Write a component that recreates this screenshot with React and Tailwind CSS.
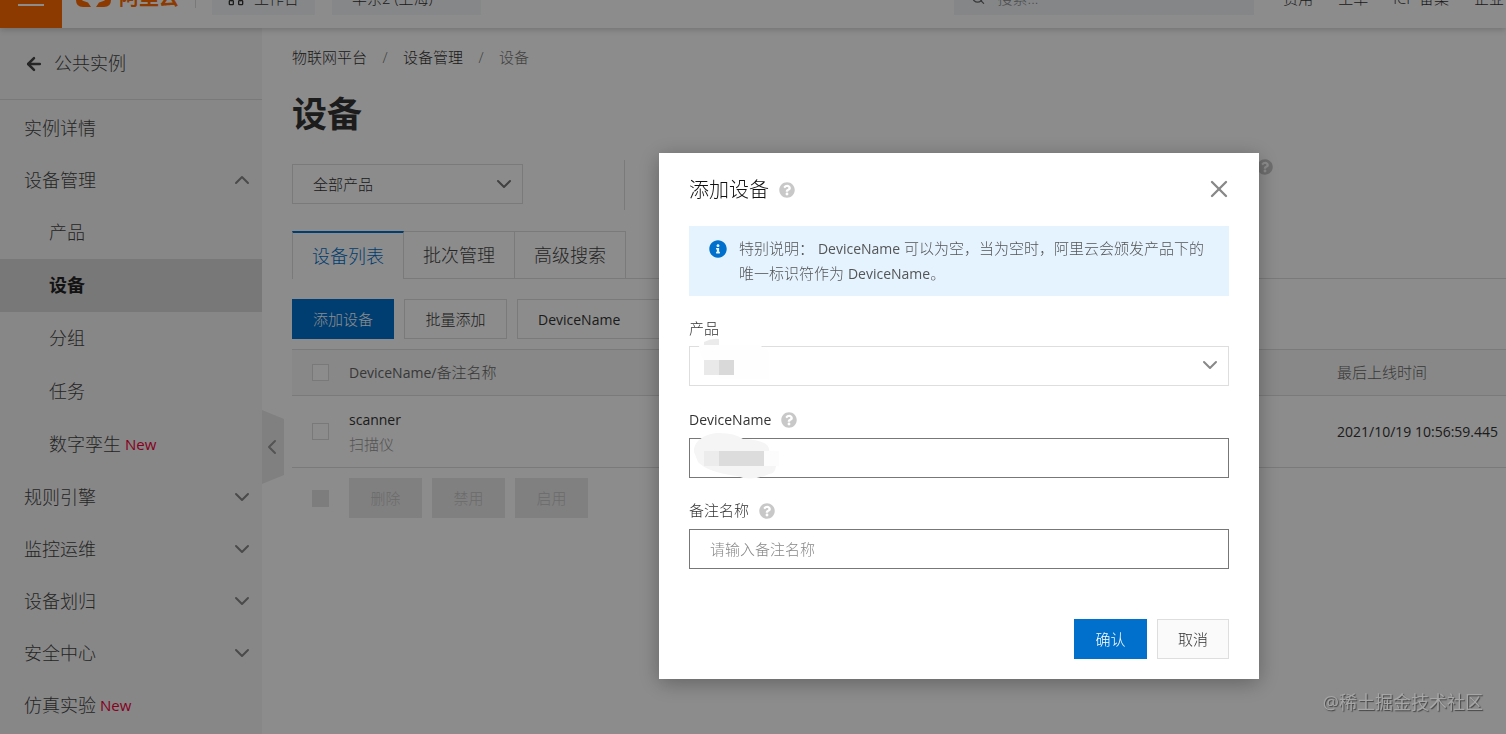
import React, { useState } from 'react';
import { ArrowLeft, ChevronDown, ChevronLeft, ChevronUp, Network, Search, X } from 'lucide-react';
import { FaInfoCircle, FaQuestionCircle } from 'react-icons/fa';
import clsx from 'clsx';

const MENU = [
  { label: '实例详情' },
  {
    label: '设备管理',
    open: true,
    children: [
      { label: '产品' },
      { label: '设备', active: true },
      { label: '分组' },
      { label: '任务' },
      { label: '数字孪生', isNew: true },
    ],
  },
  { label: '规则引擎', open: false },
  { label: '监控运维', open: false },
  { label: '设备划归', open: false },
  { label: '安全中心', open: false },
  { label: '仿真实验', isNew: true },
];

const TABS = ['设备列表', '批次管理', '高级搜索'];

const DEVICES = [{ name: 'scanner', remark: '扫描仪', lastOnline: '2021/10/19 10:56:59.445' }];

// Latin runs are set one step smaller than the Chinese text around them
function Latin({ children }) {
  return <span className="text-[14px] font-normal">{children}</span>;
}

function NewBadge() {
  return <span className="ml-1 text-[15px] font-normal text-[#f5003d]">New</span>;
}

function Help({ label }) {
  return (
    <button type="button" aria-label={label} className="text-[#c8c8c8]">
      <FaQuestionCircle className="size-4" />
    </button>
  );
}

function TopBar() {
  return (
    <header className="relative z-10 -mt-8 flex h-15 shrink-0 items-center bg-white shadow-[0_2px_6px_rgba(0,0,0,0.18)]">
      <button type="button" aria-label="菜单" className="flex h-full w-[62px] items-center justify-center bg-[#ff6a00]">
        <svg width="26" height="20" viewBox="0 0 26 20" stroke="#fff" strokeWidth="2">
          <path d="M0 3h26M0 10h26M0 17h26" />
        </svg>
      </button>
      <a href="#home" className="ml-[14px] flex items-center gap-2 text-xl font-bold text-[#ff6a00]">
        <svg width="35" height="20" viewBox="0 0 35 20" fill="#ff6a00">
          <path d="M13 1H7Q0 1 0 8v4Q0 19 7 19H15L12 14.500 7.500 13Q5 12 5 10V9Q5 7 7.500 6.500L12 5Z" />
          <path d="M22 1H28Q35 1 35 8v4Q35 19 28 19H20L23 14.500 27.500 13Q30 12 30 10V9Q30 7 27.500 6.500L23 5Z" />
          <path d="M12 9h11v2H12Z" />
        </svg>
        阿里云
      </a>
      <span className="ml-4 h-5 w-px bg-[#ddd]" />
      <a href="#workbench" className="ml-4 flex h-[34px] w-[103px] items-center justify-center gap-2.5 bg-[#f4f6f8]">
        <Network className="size-4" />
        工作台
      </a>
      <button type="button" className="ml-[17px] h-[34px] w-[149px] bg-[#f4f6f8] pl-5 text-left">
        华东2 (上海)
      </button>
      <label className="mr-[29px] ml-auto flex h-[34px] w-[300px] items-center gap-3 bg-[#f1f5f8] px-[17px] text-[#666]">
        <Search className="size-4" />
        <input type="search" aria-label="搜索" placeholder="搜索..." className="w-full bg-transparent outline-none placeholder:text-[#888]" />
      </label>
      <nav className="mr-0.5 flex gap-[25px] whitespace-nowrap">
        <a href="#cost">费用</a>
        <a href="#ticket">工单</a>
        <a href="#icp">ICP 备案</a>
        <a href="#enterprise">企业</a>
      </nav>
    </header>
  );
}

function MenuItem({ item }) {
  const Arrow = item.open ? ChevronUp : ChevronDown;
  return (
    <li>
      <a href={`#${item.label}`} className="flex h-13 items-center pr-2 pl-6">
        {item.label}
        {item.isNew && <NewBadge />}
        {item.open !== undefined && <Arrow className="ml-auto size-6 text-[#888]" strokeWidth={2} />}
      </a>
      {item.children && (
        <ul>
          {item.children.map((child) => (
            <li key={child.label}>
              <a
                href={`#${child.label}`}
                className={clsx('flex h-[53px] items-center pl-[49px]', child.active && 'bg-[#dadada] font-bold text-[#222]')}
              >
                {child.label}
                {child.isNew && <NewBadge />}
              </a>
            </li>
          ))}
        </ul>
      )}
    </li>
  );
}

function Sidebar() {
  return (
    <aside className="relative w-[262px] shrink-0 bg-[#f6f6f6] text-[18px] text-[#444]">
      <a href="#instances" className="flex h-[72px] items-center gap-2.5 border-b border-[#ddd] pl-6">
        <ArrowLeft className="size-5" strokeWidth={3} />
        公共实例
      </a>
      <ul className="pt-0.5">
        {MENU.map((item) => <MenuItem key={item.label} item={item} />)}
      </ul>
      <button type="button" aria-label="收起" className="absolute top-[382px] left-full h-[74px] w-[22px] text-[#999]">
        <svg className="absolute inset-0" width="22" height="74" viewBox="0 0 22 74" fill="#e9e9e9">
          <path d="M0 0L22 9V65L0 74Z" />
        </svg>
        <ChevronLeft className="relative -ml-0.5 size-6" strokeWidth={2} />
      </button>
    </aside>
  );
}

function DeviceTable() {
  return (
    <table className="mt-2.5 w-full border-collapse text-left">
      <thead>
        <tr className="h-[46px] border-y border-[#dedede] bg-[#f7f7f7] text-[#666]">
          <th className="w-[57px] pl-5"><input type="checkbox" aria-label="全选" className="block size-[17px] appearance-none border border-[#ddd] bg-white" /></th>
          <th className="font-light"><Latin>DeviceName/</Latin>备注名称</th>
          <th className="w-[169px] font-light">最后上线时间</th>
        </tr>
      </thead>
      <tbody>
        {DEVICES.map((device) => (
          <tr key={device.name} className="h-[72px] border-b border-[#dedede]">
            <td className="pl-5"><input type="checkbox" aria-label={device.name} className="block size-[17px] appearance-none border border-[#ddd] bg-white" /></td>
            <td className="leading-6">
              <a href="#device" className="block"><Latin>{device.name}</Latin></a>
              <span className="block text-[#999]">{device.remark}</span>
            </td>
            <td className="whitespace-nowrap"><Latin>{device.lastOnline}</Latin></td>
          </tr>
        ))}
      </tbody>
    </table>
  );
}

function DevicePage() {
  return (
    <main className="min-w-0 flex-1 pl-[30px]">
      <nav className="flex h-[58px] items-center">
        <a href="#iot">物联网平台</a>
        <span className="w-9 text-center text-[#777]">/</span>
        <a href="#manage">设备管理</a>
        <span className="w-9 text-center text-[#777]">/</span>
        <span className="text-[#777]">设备</span>
      </nav>
      <h1 className="text-[35px] leading-[56px] font-bold">设备</h1>

      <div className="mt-[18px] flex h-[50px]">
        <div className="relative mt-1 h-10 w-[231px]">
          <select aria-label="产品" className="h-full w-full appearance-none border border-[#dedede] px-5">
            <option>全部产品</option>
          </select>
          <ChevronDown className="pointer-events-none absolute top-2 right-[7px] size-6 text-[#777]" strokeWidth={2} />
        </div>
        <span className="ml-[101px] w-px bg-[#dedede]" />
        <span className="mt-[-2px] mr-[233px] ml-auto"><Help label="激活设备说明" /></span>
      </div>

      <div className="mt-[21px] flex h-12 text-[18px] text-[#444]">
        {TABS.map((tab, i) => (
          <button
            key={tab}
            type="button"
            className={clsx(
              'border-r border-[#dedede]',
              i === 0 ? 'w-28 border-t-2 border-l border-t-[#0070cc] text-[#0070cc]' : 'w-[111px] border-y'
            )}
          >
            {tab}
          </button>
        ))}
        <span className="flex-1 border-b border-[#dedede]" />
      </div>

      <div className="mt-5 flex h-10 gap-2.5">
        <button type="button" className="w-[102px] bg-[#0070cc] text-white">添加设备</button>
        <button type="button" className="w-[103px] border border-[#dedede]">批量添加</button>
        <select aria-label="搜索字段" className="w-[231px] appearance-none border border-[#dedede] px-5 text-[14px] font-normal">
          <option>DeviceName</option>
        </select>
      </div>

      <DeviceTable />

      <div className="mt-2.5 flex h-10 items-center gap-2.5 pl-5">
        <input type="checkbox" aria-label="批量操作" disabled className="mr-2.5 size-[17px] appearance-none bg-[#e3e3e3]" />
        {['删除', '禁用', '启用'].map((action) => (
          <button key={action} type="button" disabled className="h-full w-[73px] bg-[#e9e9e9] text-[#c4c4c4]">
            {action}
          </button>
        ))}
      </div>
    </main>
  );
}

function AddDeviceDialog({ onClose }) {
  const [remark, setRemark] = useState('');

  return (
    <form
      role="dialog"
      aria-labelledby="dialog-title"
      className="w-[600px] bg-white px-[30px] pb-5 shadow-[0_4px_20px_rgba(0,0,0,0.3)]"
      onSubmit={(e) => { e.preventDefault(); onClose(); }}
    >
      <div className="flex h-[73px] items-center gap-2.5">
        <h2 id="dialog-title" className="text-xl text-[#111]">添加设备</h2>
        <Help label="添加设备帮助" />
        <button type="button" aria-label="关闭" onClick={onClose} className="-mr-1 mb-0.5 ml-auto text-[#888]">
          <X className="size-7" strokeWidth={2} />
        </button>
      </div>

      <div className="flex bg-[#e5f3ff] px-5 py-2.5 text-[#555]">
        <FaInfoCircle className="mt-1 mr-3 size-[18px] shrink-0 text-[#0070cc]" />
        <p className="leading-[25px]">
          特别说明： <Latin>DeviceName</Latin> 可以为空，当为空时，阿里云会颁发产品下的<br />唯一标识符作为 <Latin>DeviceName</Latin>。
        </p>
      </div>

      <div className="mt-5">
        <label htmlFor="product" className="mb-[5px] block h-[25px] leading-[25px]">产品</label>
        <div className="relative h-10">
          <select id="product" className="h-full w-full appearance-none border border-[#dedede] px-5" />
          <ChevronDown className="pointer-events-none absolute top-[7px] right-[7px] size-6 text-[#888]" strokeWidth={2} />
          <svg className="pointer-events-none absolute -top-2 left-2" width="78" height="46" viewBox="0 0 78 46">
            <path d="M2 8V7h60l10 6v28H24Q4 26 2 8Z" fill="#fefefe" />
            <path d="M7 7V4q8-4 15-3v6Z" fill="#ebebeb" />
            <path d="M7 22h15v15H7Z" fill="#e9e9e9" />
            <path d="M22 22h15v15H22Z" fill="#d9d9d9" />
          </svg>
        </div>
      </div>

      <div className="mt-[21px]">
        <div className="mb-1.5 flex h-[25px] items-center gap-2.5">
          <label htmlFor="device-name" className="text-[14px] font-normal">DeviceName</label>
          <Help label="DeviceName 说明" />
        </div>
        <div className="relative h-10">
          <input id="device-name" type="text" className="h-full w-full border border-[#777] px-5 outline-none" />
          <svg className="pointer-events-none absolute -top-1.5 left-1" width="88" height="50" viewBox="0 0 88 50">
            <path d="M1 20C0 8 14 1 26 1Q42 1 50 7Q76 8 76 18L83 34Q82 42 76 42Q58 50 44 44Q14 40 5 30Z" fill="#f5f5f5" />
            <path d="M71 19h15v15H71Z" fill="#fcfcfc" />
            <path d="M11 19h15v15H11Z" fill="#ececec" />
            <path d="M26 19h45v15H26Z" fill="#dcdcdc" />
          </svg>
        </div>
      </div>

      <div className="mt-5">
        <div className="mb-1.5 flex h-[25px] items-center gap-2.5">
          <label htmlFor="remark">备注名称</label>
          <Help label="备注名称说明" />
        </div>
        <input
          id="remark"
          type="text"
          value={remark}
          onChange={(e) => setRemark(e.target.value)}
          placeholder="请输入备注名称"
          className="block h-10 w-full border border-[#777] px-5 outline-none placeholder:text-[#888]"
        />
      </div>

      <div className="mt-[50px] flex h-10 justify-end gap-2.5">
        <button type="submit" className="w-[73px] bg-[#0070cc] text-white">确认</button>
        <button type="button" onClick={onClose} className="w-[72px] border border-[#dedede] bg-[#fafafa]">取消</button>
      </div>
    </form>
  );
}

export default function App() {
  const [dialogOpen, setDialogOpen] = useState(true);

  return (
    <div className="relative flex h-screen flex-col overflow-hidden bg-white font-['Open_Sans','Noto_Sans_CJK_SC',sans-serif] text-[15px] font-light text-[#333]">
      <TopBar />
      <div className="flex flex-1">
        <Sidebar />
        <DevicePage />
      </div>
      {dialogOpen && (
        <div className="fixed inset-0 z-20 flex items-start justify-center bg-black/45 pt-[153px] pl-[412px]">
          <AddDeviceDialog onClose={() => setDialogOpen(false)} />
        </div>
      )}
      <p className="absolute right-[23px] bottom-5 z-30 text-[18px] leading-6 font-normal text-[#a6a6a6] [text-shadow:1px_1px_1px_#444]">
        @稀土掘金技术社区
      </p>
    </div>
  );
}
